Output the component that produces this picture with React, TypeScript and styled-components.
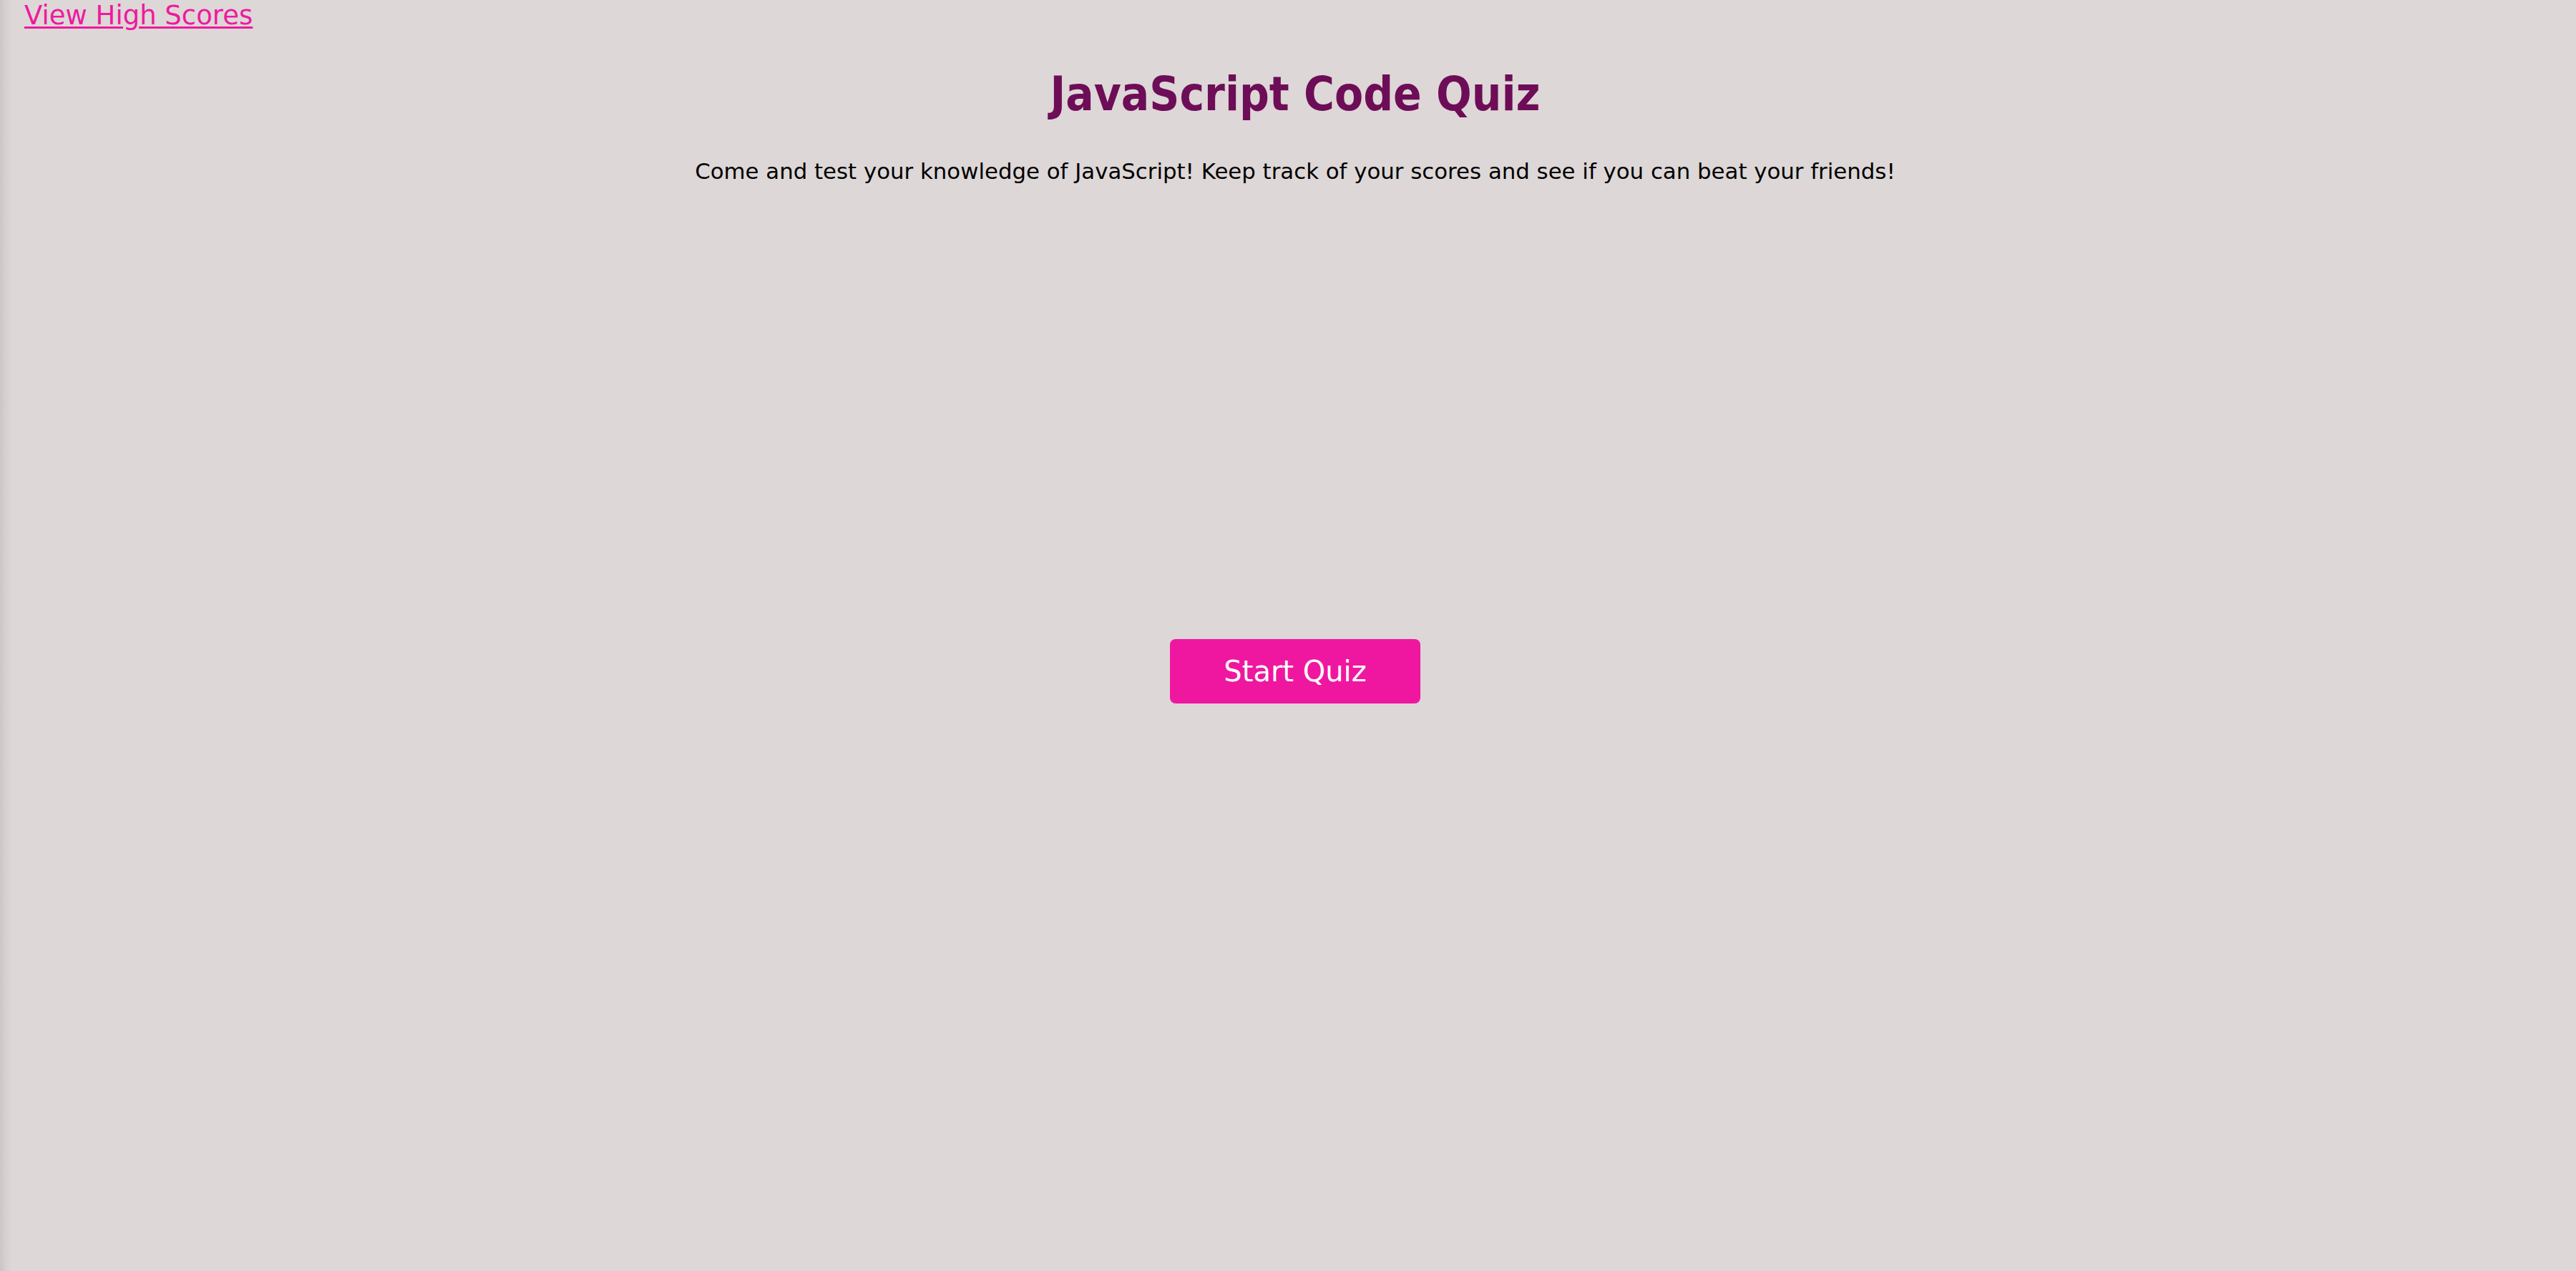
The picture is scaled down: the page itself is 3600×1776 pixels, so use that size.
import React from "react";
import styled, { createGlobalStyle } from "styled-components";

const Global = createGlobalStyle`
  html, body { margin: 0; padding: 0; }
  body {
    background: #ddd7d7;
    font-family: "DejaVu Sans", "Liberation Sans", sans-serif;
    min-height: 1776px;
  }
`;

const Page = styled.div`
  min-height: 1776px;
  display: flex;
  flex-direction: column;
  padding-left: 20px;
  box-sizing: border-box;
  background: linear-gradient(to right, #cbc6c6 0px, #d6d0d0 8px, #ddd7d7 18px);
`;

const TopBar = styled.nav`
  display: flex;
  padding-left: 14px;
  height: 44px;
`;

const HighScoreLink = styled.a`
  color: #ee1a9e;
  font-size: 37px;
  line-height: 44px;
  text-decoration: underline;
  text-underline-offset: 3px;
  cursor: pointer;
`;

const Header = styled.header`
  display: flex;
  flex-direction: column;
  align-items: center;
`;

const Title = styled.h1`
  margin: 48px 0 0;
  color: #6e0d57;
  font-family: "DejaVu Sans Condensed", "DejaVu Sans", sans-serif;
  font-size: 65px;
  line-height: 80px;
  font-weight: bold;
`;

const Intro = styled.p`
  margin: 47px 0 0;
  font-size: 30.8px;
  line-height: 40px;
  color: #000;
`;

const Main = styled.main`
  display: flex;
  justify-content: center;
  padding-top: 634px;
`;

const StartButton = styled.button`
  width: 350px;
  height: 90px;
  border: none;
  border-radius: 8px;
  background: #ef17a0;
  color: #fff;
  font-family: inherit;
  font-size: 40px;
  cursor: pointer;
`;

export default function App() {
  return (
    <>
      <Global />
      <Page>
        <TopBar>
          <HighScoreLink>View High Scores</HighScoreLink>
        </TopBar>
        <Header>
          <Title>JavaScript Code Quiz</Title>
          <Intro>
            Come and test your knowledge of JavaScript! Keep track of your scores and see if you can beat your friends!
          </Intro>
        </Header>
        <Main>
          <StartButton>Start Quiz</StartButton>
        </Main>
      </Page>
    </>
  );
}
